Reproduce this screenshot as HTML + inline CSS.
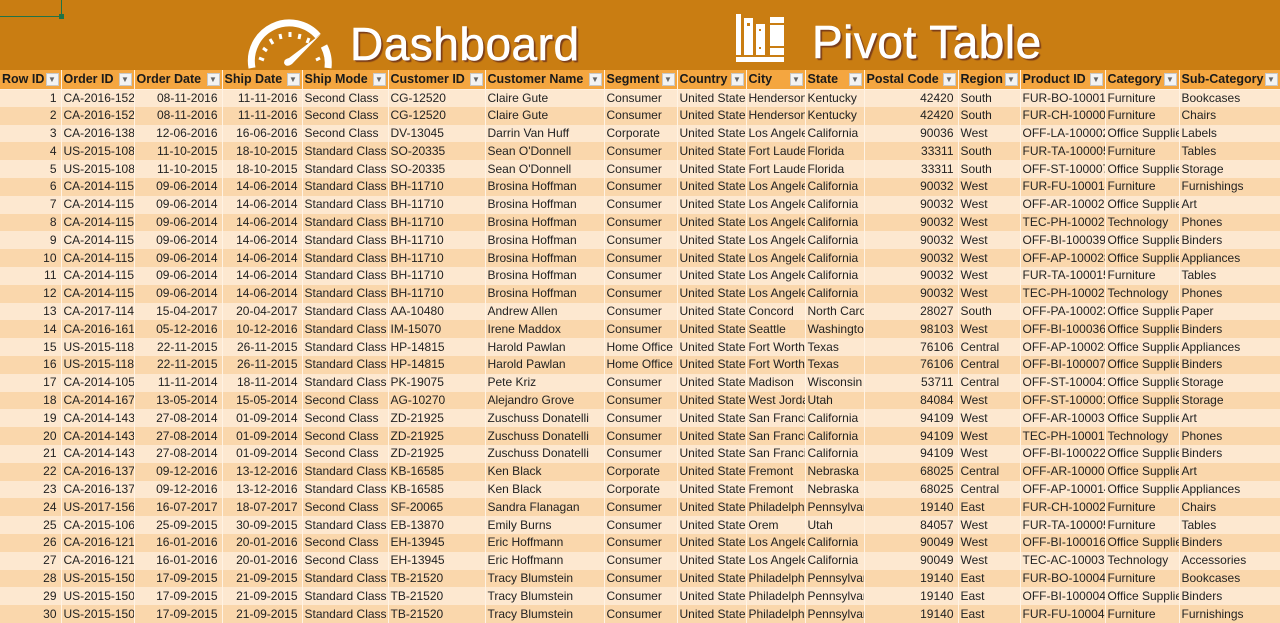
<!DOCTYPE html>
<html><head><meta charset="utf-8"><style>
*{margin:0;padding:0;box-sizing:border-box}
body{width:1280px;height:621px;overflow:hidden;background:#fde8d0;font-family:"Liberation Sans",sans-serif;position:relative}
.band{position:absolute;left:0;top:0;width:1280px;height:70px;background:#c97d12}
.sel{position:absolute;left:0;top:0;width:62px;height:17px;border:1px solid #217346;border-top:none;border-left:none}
.sel:after{content:"";position:absolute;right:-3px;bottom:-3px;width:5px;height:5px;background:#217346}
.title{position:absolute;color:#fff;font-size:46px;font-weight:normal;text-shadow:2px 2px 1px #7a3d1a,1px 1px 0 #7a3d1a;letter-spacing:0.5px;-webkit-text-stroke:0.6px #fff}
table{position:absolute;left:0;top:70px;border-collapse:collapse;table-layout:fixed;width:1280px}
th,td{white-space:nowrap;overflow:hidden;padding:0 2px;border-right:1px solid #fff3e4}
th{height:19px;background:#f4a640;font-size:12.5px;font-weight:bold;text-align:left;color:#1a1a1a;position:relative;padding-right:16px;border-bottom:1px solid #fff1e0}
th i{position:absolute;right:2px;top:3px;width:13px;height:13px;background:#f3f3f3;border:1px solid #c9c9c9;font-style:normal;font-size:8px;line-height:11px;text-align:center;color:#666}
td{height:17.8px;font-size:12px;color:#222;line-height:17px}
tr:nth-child(odd) td{background:#fad7ac}
tr:nth-child(even) td{background:#fde8d0}
td.r{text-align:right;padding-right:4px}
</style></head><body>
<div class="band"></div>
<div class="sel"></div>
<svg style="position:absolute;left:244px;top:14px" width="92" height="56" viewBox="0 0 92 56">
<path d="M8 54 A38 38 0 0 1 74 22" fill="none" stroke="#fff" stroke-width="7"/>
<path d="M80 32 A38 38 0 0 1 84 54" fill="none" stroke="#fff" stroke-width="7"/>
<g stroke="#fff" stroke-width="3">
<line x1="15" y1="44" x2="20" y2="46"/><line x1="19" y1="34" x2="23" y2="37"/><line x1="26" y1="25" x2="29" y2="30"/><line x1="36" y1="20" x2="37" y2="25"/><line x1="46" y1="18" x2="46" y2="23"/><line x1="56" y1="20" x2="55" y2="25"/><line x1="65" y1="24" x2="63" y2="29"/><line x1="76" y1="44" x2="72" y2="46"/>
</g>
<path d="M77 20 L48 50 Q42 54 40 49 Q40 45 45 44 Z" fill="#fff"/>
</svg>
<div class="title" style="left:350px;top:17px">Dashboard</div>
<svg style="position:absolute;left:736px;top:14px" width="50" height="50" viewBox="0 0 50 50">
<g fill="#fff">
<rect x="0" y="0" width="5" height="41"/>
<rect x="8" y="4" width="9" height="37"/>
<rect x="20" y="10" width="9" height="31"/>
<rect x="34" y="3" width="14" height="38"/>
<rect x="0" y="43" width="48" height="5"/>
</g>
<g fill="#c97d12"><rect x="11" y="9" width="3" height="3"/><rect x="23" y="15" width="2" height="2"/><rect x="23" y="33" width="2" height="2"/><rect x="34" y="9" width="14" height="2"/><rect x="34" y="32" width="14" height="2"/></g>
</svg>
<div class="title" style="left:812px;top:15px">Pivot Table</div>
<table>
<colgroup><col style="width:61px"><col style="width:73px"><col style="width:88px"><col style="width:80px"><col style="width:86px"><col style="width:97px"><col style="width:119px"><col style="width:73px"><col style="width:69px"><col style="width:59px"><col style="width:59px"><col style="width:94px"><col style="width:62px"><col style="width:85px"><col style="width:74px"><col style="width:101px"></colgroup>
<tr><th>Row ID<i>▼</i></th><th>Order ID<i>▼</i></th><th>Order Date<i>▼</i></th><th>Ship Date<i>▼</i></th><th>Ship Mode<i>▼</i></th><th>Customer ID<i>▼</i></th><th>Customer Name<i>▼</i></th><th>Segment<i>▼</i></th><th>Country<i>▼</i></th><th>City<i>▼</i></th><th>State<i>▼</i></th><th>Postal Code<i>▼</i></th><th>Region<i>▼</i></th><th>Product ID<i>▼</i></th><th>Category<i>▼</i></th><th>Sub-Category<i>▼</i></th></tr>
<tr><td class="r">1</td><td>CA-2016-152</td><td class="r">08-11-2016</td><td class="r">11-11-2016</td><td>Second Class</td><td>CG-12520</td><td>Claire Gute</td><td>Consumer</td><td>United States</td><td>Henderson</td><td>Kentucky</td><td class="r">42420</td><td>South</td><td>FUR-BO-10001798</td><td>Furniture</td><td>Bookcases</td></tr>
<tr><td class="r">2</td><td>CA-2016-152</td><td class="r">08-11-2016</td><td class="r">11-11-2016</td><td>Second Class</td><td>CG-12520</td><td>Claire Gute</td><td>Consumer</td><td>United States</td><td>Henderson</td><td>Kentucky</td><td class="r">42420</td><td>South</td><td>FUR-CH-10000454</td><td>Furniture</td><td>Chairs</td></tr>
<tr><td class="r">3</td><td>CA-2016-138</td><td class="r">12-06-2016</td><td class="r">16-06-2016</td><td>Second Class</td><td>DV-13045</td><td>Darrin Van Huff</td><td>Corporate</td><td>United States</td><td>Los Angeles</td><td>California</td><td class="r">90036</td><td>West</td><td>OFF-LA-10000240</td><td>Office Supplies</td><td>Labels</td></tr>
<tr><td class="r">4</td><td>US-2015-108</td><td class="r">11-10-2015</td><td class="r">18-10-2015</td><td>Standard Class</td><td>SO-20335</td><td>Sean O'Donnell</td><td>Consumer</td><td>United States</td><td>Fort Lauderdale</td><td>Florida</td><td class="r">33311</td><td>South</td><td>FUR-TA-10000577</td><td>Furniture</td><td>Tables</td></tr>
<tr><td class="r">5</td><td>US-2015-108</td><td class="r">11-10-2015</td><td class="r">18-10-2015</td><td>Standard Class</td><td>SO-20335</td><td>Sean O'Donnell</td><td>Consumer</td><td>United States</td><td>Fort Lauderdale</td><td>Florida</td><td class="r">33311</td><td>South</td><td>OFF-ST-10000760</td><td>Office Supplies</td><td>Storage</td></tr>
<tr><td class="r">6</td><td>CA-2014-115</td><td class="r">09-06-2014</td><td class="r">14-06-2014</td><td>Standard Class</td><td>BH-11710</td><td>Brosina Hoffman</td><td>Consumer</td><td>United States</td><td>Los Angeles</td><td>California</td><td class="r">90032</td><td>West</td><td>FUR-FU-10001487</td><td>Furniture</td><td>Furnishings</td></tr>
<tr><td class="r">7</td><td>CA-2014-115</td><td class="r">09-06-2014</td><td class="r">14-06-2014</td><td>Standard Class</td><td>BH-11710</td><td>Brosina Hoffman</td><td>Consumer</td><td>United States</td><td>Los Angeles</td><td>California</td><td class="r">90032</td><td>West</td><td>OFF-AR-10002833</td><td>Office Supplies</td><td>Art</td></tr>
<tr><td class="r">8</td><td>CA-2014-115</td><td class="r">09-06-2014</td><td class="r">14-06-2014</td><td>Standard Class</td><td>BH-11710</td><td>Brosina Hoffman</td><td>Consumer</td><td>United States</td><td>Los Angeles</td><td>California</td><td class="r">90032</td><td>West</td><td>TEC-PH-10002275</td><td>Technology</td><td>Phones</td></tr>
<tr><td class="r">9</td><td>CA-2014-115</td><td class="r">09-06-2014</td><td class="r">14-06-2014</td><td>Standard Class</td><td>BH-11710</td><td>Brosina Hoffman</td><td>Consumer</td><td>United States</td><td>Los Angeles</td><td>California</td><td class="r">90032</td><td>West</td><td>OFF-BI-10003910</td><td>Office Supplies</td><td>Binders</td></tr>
<tr><td class="r">10</td><td>CA-2014-115</td><td class="r">09-06-2014</td><td class="r">14-06-2014</td><td>Standard Class</td><td>BH-11710</td><td>Brosina Hoffman</td><td>Consumer</td><td>United States</td><td>Los Angeles</td><td>California</td><td class="r">90032</td><td>West</td><td>OFF-AP-10002892</td><td>Office Supplies</td><td>Appliances</td></tr>
<tr><td class="r">11</td><td>CA-2014-115</td><td class="r">09-06-2014</td><td class="r">14-06-2014</td><td>Standard Class</td><td>BH-11710</td><td>Brosina Hoffman</td><td>Consumer</td><td>United States</td><td>Los Angeles</td><td>California</td><td class="r">90032</td><td>West</td><td>FUR-TA-10001539</td><td>Furniture</td><td>Tables</td></tr>
<tr><td class="r">12</td><td>CA-2014-115</td><td class="r">09-06-2014</td><td class="r">14-06-2014</td><td>Standard Class</td><td>BH-11710</td><td>Brosina Hoffman</td><td>Consumer</td><td>United States</td><td>Los Angeles</td><td>California</td><td class="r">90032</td><td>West</td><td>TEC-PH-10002033</td><td>Technology</td><td>Phones</td></tr>
<tr><td class="r">13</td><td>CA-2017-114</td><td class="r">15-04-2017</td><td class="r">20-04-2017</td><td>Standard Class</td><td>AA-10480</td><td>Andrew Allen</td><td>Consumer</td><td>United States</td><td>Concord</td><td>North Carolina</td><td class="r">28027</td><td>South</td><td>OFF-PA-10002365</td><td>Office Supplies</td><td>Paper</td></tr>
<tr><td class="r">14</td><td>CA-2016-161</td><td class="r">05-12-2016</td><td class="r">10-12-2016</td><td>Standard Class</td><td>IM-15070</td><td>Irene Maddox</td><td>Consumer</td><td>United States</td><td>Seattle</td><td>Washington</td><td class="r">98103</td><td>West</td><td>OFF-BI-10003656</td><td>Office Supplies</td><td>Binders</td></tr>
<tr><td class="r">15</td><td>US-2015-118</td><td class="r">22-11-2015</td><td class="r">26-11-2015</td><td>Standard Class</td><td>HP-14815</td><td>Harold Pawlan</td><td>Home Office</td><td>United States</td><td>Fort Worth</td><td>Texas</td><td class="r">76106</td><td>Central</td><td>OFF-AP-10002311</td><td>Office Supplies</td><td>Appliances</td></tr>
<tr><td class="r">16</td><td>US-2015-118</td><td class="r">22-11-2015</td><td class="r">26-11-2015</td><td>Standard Class</td><td>HP-14815</td><td>Harold Pawlan</td><td>Home Office</td><td>United States</td><td>Fort Worth</td><td>Texas</td><td class="r">76106</td><td>Central</td><td>OFF-BI-10000756</td><td>Office Supplies</td><td>Binders</td></tr>
<tr><td class="r">17</td><td>CA-2014-105</td><td class="r">11-11-2014</td><td class="r">18-11-2014</td><td>Standard Class</td><td>PK-19075</td><td>Pete Kriz</td><td>Consumer</td><td>United States</td><td>Madison</td><td>Wisconsin</td><td class="r">53711</td><td>Central</td><td>OFF-ST-10004186</td><td>Office Supplies</td><td>Storage</td></tr>
<tr><td class="r">18</td><td>CA-2014-167</td><td class="r">13-05-2014</td><td class="r">15-05-2014</td><td>Second Class</td><td>AG-10270</td><td>Alejandro Grove</td><td>Consumer</td><td>United States</td><td>West Jordan</td><td>Utah</td><td class="r">84084</td><td>West</td><td>OFF-ST-10000107</td><td>Office Supplies</td><td>Storage</td></tr>
<tr><td class="r">19</td><td>CA-2014-143</td><td class="r">27-08-2014</td><td class="r">01-09-2014</td><td>Second Class</td><td>ZD-21925</td><td>Zuschuss Donatelli</td><td>Consumer</td><td>United States</td><td>San Francisco</td><td>California</td><td class="r">94109</td><td>West</td><td>OFF-AR-10003056</td><td>Office Supplies</td><td>Art</td></tr>
<tr><td class="r">20</td><td>CA-2014-143</td><td class="r">27-08-2014</td><td class="r">01-09-2014</td><td>Second Class</td><td>ZD-21925</td><td>Zuschuss Donatelli</td><td>Consumer</td><td>United States</td><td>San Francisco</td><td>California</td><td class="r">94109</td><td>West</td><td>TEC-PH-10001949</td><td>Technology</td><td>Phones</td></tr>
<tr><td class="r">21</td><td>CA-2014-143</td><td class="r">27-08-2014</td><td class="r">01-09-2014</td><td>Second Class</td><td>ZD-21925</td><td>Zuschuss Donatelli</td><td>Consumer</td><td>United States</td><td>San Francisco</td><td>California</td><td class="r">94109</td><td>West</td><td>OFF-BI-10002215</td><td>Office Supplies</td><td>Binders</td></tr>
<tr><td class="r">22</td><td>CA-2016-137</td><td class="r">09-12-2016</td><td class="r">13-12-2016</td><td>Standard Class</td><td>KB-16585</td><td>Ken Black</td><td>Corporate</td><td>United States</td><td>Fremont</td><td>Nebraska</td><td class="r">68025</td><td>Central</td><td>OFF-AR-10000246</td><td>Office Supplies</td><td>Art</td></tr>
<tr><td class="r">23</td><td>CA-2016-137</td><td class="r">09-12-2016</td><td class="r">13-12-2016</td><td>Standard Class</td><td>KB-16585</td><td>Ken Black</td><td>Corporate</td><td>United States</td><td>Fremont</td><td>Nebraska</td><td class="r">68025</td><td>Central</td><td>OFF-AP-10001492</td><td>Office Supplies</td><td>Appliances</td></tr>
<tr><td class="r">24</td><td>US-2017-156</td><td class="r">16-07-2017</td><td class="r">18-07-2017</td><td>Second Class</td><td>SF-20065</td><td>Sandra Flanagan</td><td>Consumer</td><td>United States</td><td>Philadelphia</td><td>Pennsylvania</td><td class="r">19140</td><td>East</td><td>FUR-CH-10002774</td><td>Furniture</td><td>Chairs</td></tr>
<tr><td class="r">25</td><td>CA-2015-106</td><td class="r">25-09-2015</td><td class="r">30-09-2015</td><td>Standard Class</td><td>EB-13870</td><td>Emily Burns</td><td>Consumer</td><td>United States</td><td>Orem</td><td>Utah</td><td class="r">84057</td><td>West</td><td>FUR-TA-10000577</td><td>Furniture</td><td>Tables</td></tr>
<tr><td class="r">26</td><td>CA-2016-121</td><td class="r">16-01-2016</td><td class="r">20-01-2016</td><td>Second Class</td><td>EH-13945</td><td>Eric Hoffmann</td><td>Consumer</td><td>United States</td><td>Los Angeles</td><td>California</td><td class="r">90049</td><td>West</td><td>OFF-BI-10001634</td><td>Office Supplies</td><td>Binders</td></tr>
<tr><td class="r">27</td><td>CA-2016-121</td><td class="r">16-01-2016</td><td class="r">20-01-2016</td><td>Second Class</td><td>EH-13945</td><td>Eric Hoffmann</td><td>Consumer</td><td>United States</td><td>Los Angeles</td><td>California</td><td class="r">90049</td><td>West</td><td>TEC-AC-10003027</td><td>Technology</td><td>Accessories</td></tr>
<tr><td class="r">28</td><td>US-2015-150</td><td class="r">17-09-2015</td><td class="r">21-09-2015</td><td>Standard Class</td><td>TB-21520</td><td>Tracy Blumstein</td><td>Consumer</td><td>United States</td><td>Philadelphia</td><td>Pennsylvania</td><td class="r">19140</td><td>East</td><td>FUR-BO-10004834</td><td>Furniture</td><td>Bookcases</td></tr>
<tr><td class="r">29</td><td>US-2015-150</td><td class="r">17-09-2015</td><td class="r">21-09-2015</td><td>Standard Class</td><td>TB-21520</td><td>Tracy Blumstein</td><td>Consumer</td><td>United States</td><td>Philadelphia</td><td>Pennsylvania</td><td class="r">19140</td><td>East</td><td>OFF-BI-10000474</td><td>Office Supplies</td><td>Binders</td></tr>
<tr><td class="r">30</td><td>US-2015-150</td><td class="r">17-09-2015</td><td class="r">21-09-2015</td><td>Standard Class</td><td>TB-21520</td><td>Tracy Blumstein</td><td>Consumer</td><td>United States</td><td>Philadelphia</td><td>Pennsylvania</td><td class="r">19140</td><td>East</td><td>FUR-FU-10004848</td><td>Furniture</td><td>Furnishings</td></tr>
</table>
</body></html>
